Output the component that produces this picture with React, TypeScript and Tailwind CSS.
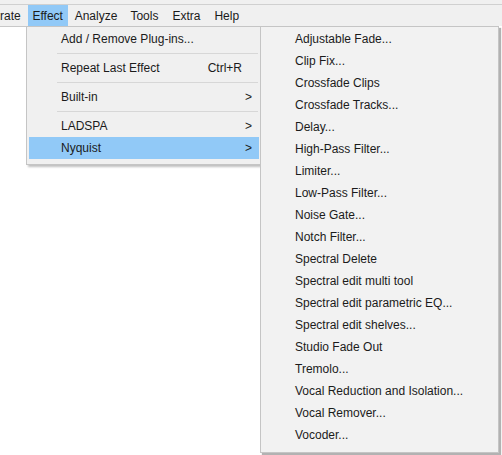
import React from "react";

const sub = [
  "Adjustable Fade...",
  "Clip Fix...",
  "Crossfade Clips",
  "Crossfade Tracks...",
  "Delay...",
  "High-Pass Filter...",
  "Limiter...",
  "Low-Pass Filter...",
  "Noise Gate...",
  "Notch Filter...",
  "Spectral Delete",
  "Spectral edit multi tool",
  "Spectral edit parametric EQ...",
  "Spectral edit shelves...",
  "Studio Fade Out",
  "Tremolo...",
  "Vocal Reduction and Isolation...",
  "Vocal Remover...",
  "Vocoder...",
];

function Sep() {
  return (
    <div className="h-[7px] flex items-center pl-[30px] pr-[3px]">
      <div className="h-px w-full bg-[#d7d7d7]" />
    </div>
  );
}

function Item({ label, right, arrow, active }: { label: string; right?: string; arrow?: boolean; active?: boolean }) {
  return (
    <div
      className={`h-[22px] flex items-center pl-[32px] pr-[7px] mx-[2px] ${active ? "bg-[#91c9f7]" : ""}`}
    >
      <span className="flex-1">{label}</span>
      {right && <span className="mr-[10px]">{right}</span>}
      {arrow && <span>&gt;</span>}
    </div>
  );
}

export default function App() {
  return (
    <div
      className="relative w-[502px] h-[455px] bg-white overflow-hidden text-[12px] text-[#1b1b1b]"
      style={{ fontFamily: '"Liberation Sans", Arial, sans-serif' }}
    >
      <div className="h-[4px] bg-[#f0f0f0]" />
      <div className="h-px bg-[#d0d0d0]" />
      <div className="h-[21px] bg-[#f0f0f0] flex items-stretch">
        <div className="flex items-center">rate</div>
        <div className="ml-[7px] w-[40px] bg-[#91c9f7] flex items-center justify-center">Effect</div>
        <div className="ml-[7px] flex items-center">Analyze</div>
        <div className="ml-[13px] flex items-center">Tools</div>
        <div className="ml-[14px] flex items-center">Extra</div>
        <div className="ml-[14px] flex items-center">Help</div>
      </div>
      <div className="h-px bg-[#c8c8c8] w-[27px]" />

      {/* Effect dropdown */}
      <div className="absolute left-[26px] top-[26px] w-[236px] bg-[#f0f0f0] border border-[#c5c5c5] pt-px pb-[5px] shadow-[2px_2px_2px_rgba(0,0,0,0.25)]">
        <Item label="Add / Remove Plug-ins..." />
        <Sep />
        <Item label="Repeat Last Effect" right="Ctrl+R" />
        <Sep />
        <Item label="Built-in" arrow />
        <Sep />
        <Item label="LADSPA" arrow />
        <Item label="Nyquist" arrow active />
      </div>

      {/* Nyquist submenu */}
      <div className="absolute left-[260px] top-[26px] w-[239px] h-[427px] bg-[#f2f2f2] border border-[#c5c5c5] pt-px shadow-[2px_2px_1px_rgba(0,0,0,0.3)]">
        {sub.map((s) => (
          <div key={s} className="h-[22px] flex items-center pl-[34px]">
            {s}
          </div>
        ))}
      </div>
    </div>
  );
}
